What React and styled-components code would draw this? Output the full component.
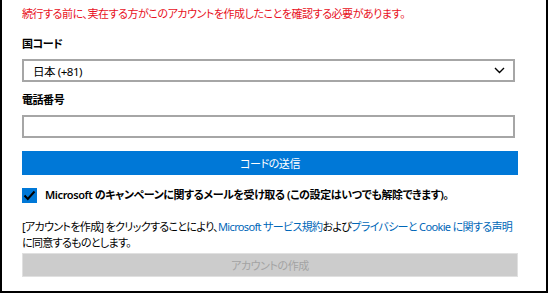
import React from 'react'
import styled, { createGlobalStyle } from 'styled-components';

const GlobalStyle = createGlobalStyle`
  html, body { margin: 0; padding: 0; background: #fff; }
  body {
    font-family: "Noto Sans", "Noto Sans CJK JP", sans-serif;
    font-feature-settings: "palt";
    color: #000;
  }
`

const Frame = styled.div`
  width: 548px;
  height: 293px;
  box-sizing: border-box;
  border: 2px solid #000;
  border-top: none;
  padding: 6px 0 0 20px;
  display: flex;
  flex-direction: column;
  overflow: hidden;
  font-size: 11px;
  letter-spacing: -0.45px;
`

const Notice = styled.div`
  color: #e81123;
  line-height: 16px;
`

const Label = styled.div`
  margin-top: ${p => p.$top}px;
  line-height: 16px;
  font-weight: 700;
`

const Field = styled.div`
  margin-top: 7px;
  width: 493px;
  height: 23px;
  box-sizing: border-box;
  border: 2px solid #a6a6a6;
  display: flex;
  align-items: center;
  justify-content: space-between;
  padding: 0 8px 0 9px;
  font-size: 11.5px;
`

const Button = styled.div`
  margin-top: ${p => p.$top}px;
  width: 496px;
  height: 24px;
  display: flex;
  align-items: center;
  justify-content: center;
  font-size: 11px;
  background: ${p => p.$disabled ? '#cccccc' : '#0078d7'};
  color: ${p => p.$disabled ? '#a3a3a3' : '#fff'};
  border: 1px solid ${p => p.$disabled ? '#e0e0e0' : '#0078d7'};
  box-sizing: border-box;
`

const CheckRow = styled.div`
  margin-top: 12px;
  display: flex;
  align-items: center;
  gap: 8px;
  line-height: 16px;
  font-weight: 600;
  letter-spacing: -0.4px;
`

const Box = styled.span`
  width: 15px;
  height: 15px;
  background: #0078d7;
  display: flex;
  align-items: center;
  justify-content: center;
`

const Terms = styled.div`
  margin-top: 16px;
  width: 520px;
  line-height: 16px;
  letter-spacing: -0.65px;
`

const Link = styled.a`
  color: #0067b8;
  text-decoration: none;
`

export default function App() {
  return (
    <Frame>
      <GlobalStyle />
      <Notice>続行する前に、実在する方がこのアカウントを作成したことを確認する必要があります。</Notice>
      <Label $top={14}>国コード</Label>
      <Field>
        <span>日本 (+81)</span>
        <svg width="11" height="7" viewBox="0 0 11 7">
          <path d="M1 1 L5.5 5.5 L10 1" fill="none" stroke="#000" strokeWidth="1.4" />
        </svg>
      </Field>
      <Label $top={10}>電話番号</Label>
      <Field />
      <Button $top={13}>コードの送信</Button>
      <CheckRow>
        <Box>
          <svg width="13" height="11" viewBox="0 0 13 11">
            <path d="M1.5 5.5 L4.8 9 L11.5 1.5" fill="none" stroke="#000" strokeWidth="2" />
          </svg>
        </Box>
        <span>Microsoft のキャンペーンに関するメールを受け取る (この設定はいつでも解除できます)。</span>
      </CheckRow>
      <Terms>
        [アカウントを作成] をクリックすることにより、<Link>Microsoft サービス規約</Link>および<Link>プライバシーと Cookie に関する声明</Link><br />
        に同意するものとします。
      </Terms>
      <Button $top={2} $disabled>アカウントの作成</Button>
    </Frame>
  )
}
